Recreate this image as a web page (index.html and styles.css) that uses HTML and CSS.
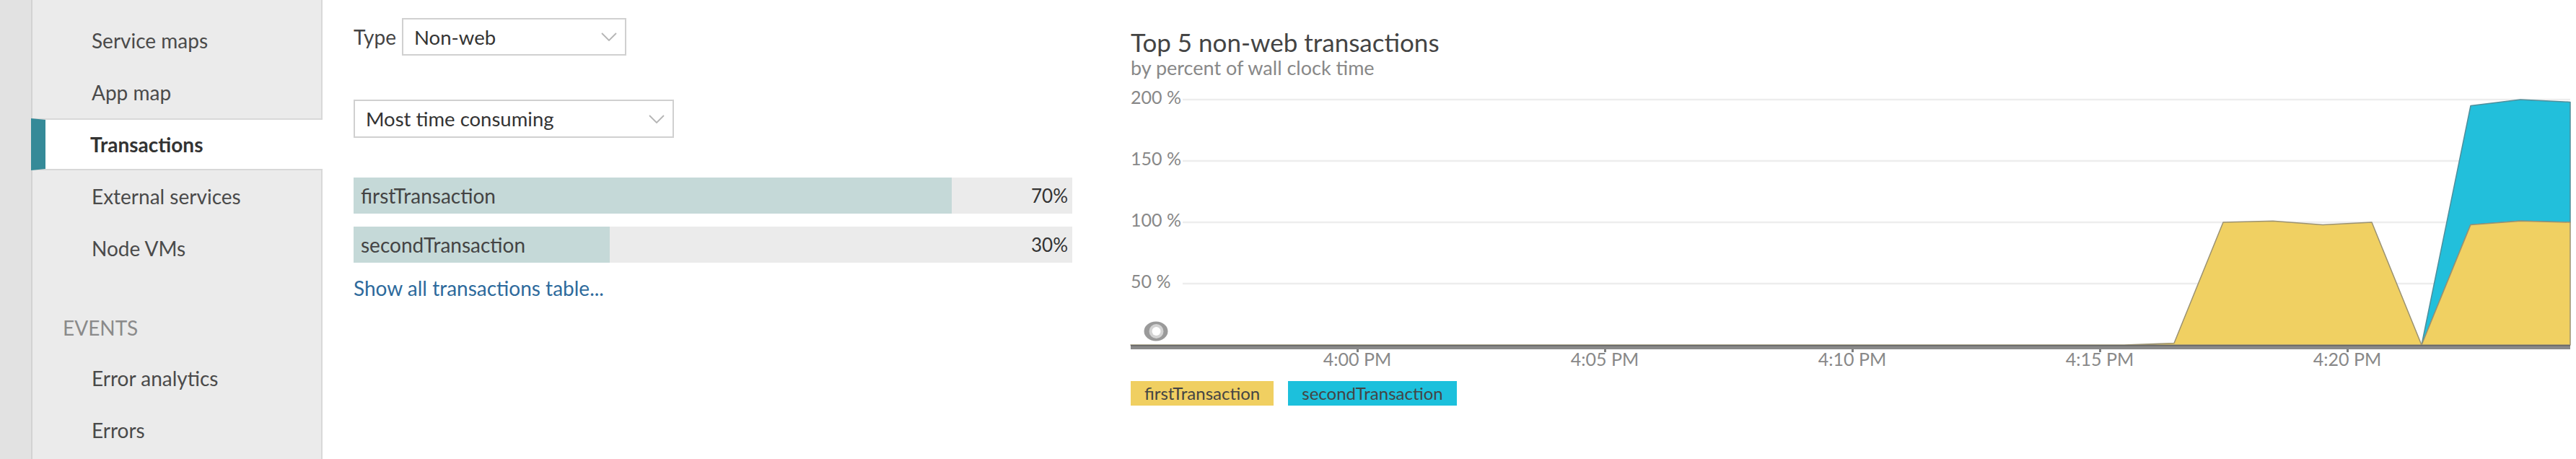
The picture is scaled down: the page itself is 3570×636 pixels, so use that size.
FILE: index.html
```html
<!DOCTYPE html>
<html>
<head>
<meta charset="utf-8">
<link rel="stylesheet" href="styles.css">
</head>
<body>
<div class="app">
  <div class="rail"></div>
  <nav class="nav">
    <div class="nav-item">Service maps</div>
    <div class="nav-item">App map</div>
    <div class="nav-item active">Transactions</div>
    <div class="nav-item">External services</div>
    <div class="nav-item">Node VMs</div>
    <div class="nav-head">EVENTS</div>
    <div class="nav-item">Error analytics</div>
    <div class="nav-item">Errors</div>
  </nav>
  <main class="main">
    <div class="type-row">
      <span class="type-label">Type</span>
      <div class="select select-type"><span>Non-web</span><svg class="chev" width="22" height="12" viewBox="0 0 22 12"><polyline points="1,1 11,11 21,1" fill="none" stroke="#b5b5b5" stroke-width="1.8"/></svg></div>
    </div>
    <div class="select select-sort"><span>Most time consuming</span><svg class="chev" width="22" height="12" viewBox="0 0 22 12"><polyline points="1,1 11,11 21,1" fill="none" stroke="#b5b5b5" stroke-width="1.8"/></svg></div>
    <div class="bars">
      <div class="bar">
        <div class="bar-fill" style="width:83.2%"></div>
        <span class="bar-name">firstTransaction</span>
        <span class="bar-pct">70%</span>
      </div>
      <div class="bar">
        <div class="bar-fill" style="width:35.6%"></div>
        <span class="bar-name">secondTransaction</span>
        <span class="bar-pct">30%</span>
      </div>
    </div>
    <a class="show-all">Show all transactions table...</a>
  </main>
  <section class="chart">
    <div class="chart-title">Top 5 non-web transactions</div>
    <div class="chart-sub">by percent of wall clock time</div>
    <svg class="plot" width="1995" height="410" viewBox="0 0 1995 410">
      <g class="grid">
        <line x1="72" y1="28" x2="1995" y2="28"/>
        <line x1="72" y1="113" x2="1995" y2="113"/>
        <line x1="72" y1="198" x2="1995" y2="198"/>
        <line x1="72" y1="283" x2="1995" y2="283"/>
      </g>
      <g class="ylab">
        <text x="0" y="28">200 %</text>
        <text x="0" y="113">150 %</text>
        <text x="0" y="198">100 %</text>
        <text x="0" y="283">50 %</text>
      </g>
      <ellipse cx="35" cy="349" rx="16.5" ry="13.5" fill="#9a9a9a"/>
      <ellipse cx="35.5" cy="349" rx="10" ry="10" fill="#d3d3d3"/>
      <circle cx="35.5" cy="349" r="6" fill="#fff"/>
      <polygon class="area-blue" points="1789,368 1857,36.5 1926,28 1995,31.4 1995,198 1926,196.3 1857,201.4"/>
      <polygon class="area-yellow" points="0,368 1377,368 1446,365.5 1514,198 1583,196.3 1652,201.4 1720,198 1789,368 1857,201.4 1926,196.3 1995,198 1995,368"/>
      <rect x="0" y="368" width="1995" height="6" fill="#898989"/>
      <rect x="0" y="368" width="1995" height="1.5" fill="#666"/>
      <g class="ticks">
        <rect x="313" y="374" width="3" height="4"/>
        <rect x="656" y="374" width="3" height="4"/>
        <rect x="999" y="374" width="3" height="4"/>
        <rect x="1342" y="374" width="3" height="4"/>
        <rect x="1685" y="374" width="3" height="4"/>
      </g>
      <g class="xlab">
        <text x="314" y="391">4:00 PM</text>
        <text x="657" y="391">4:05 PM</text>
        <text x="1000" y="391">4:10 PM</text>
        <text x="1343" y="391">4:15 PM</text>
        <text x="1686" y="391">4:20 PM</text>
      </g>
    </svg>
    <div class="legend">
      <span class="leg leg-first">firstTransaction</span>
      <span class="leg leg-second">secondTransaction</span>
    </div>
  </section>
</div>
</body>
</html>
```

FILE: styles.css
```css
* { box-sizing: border-box; }
html, body { margin: 0; padding: 0; background: #fff; }
body { width: 3570px; height: 636px; overflow: hidden; font-family: Lato, "Liberation Sans", sans-serif; color: #444; }

.app { display: flex; width: 3570px; height: 636px; }

.rail { flex: none; width: 45px; background: #e2e2e2; border-right: 2px solid #d2d2d2; }

.nav { flex: none; width: 402px; background: #ebebeb; border-right: 2px solid #d8d8d8; padding-top: 20px; }
.nav-item { height: 72px; display: flex; align-items: center; padding-left: 82px; font-size: 28px; color: #4a4a4a; }
.nav-item.active { background: #fff; font-weight: 700; color: #333; border-top: 2px solid #d8d8d8; border-bottom: 2px solid #d8d8d8; border-left: 20px solid #358a98; padding-left: 62px; margin-left: -2px; margin-right: -2px; }
.nav-head { height: 68px; margin-top: 40px; display: flex; align-items: center; padding-left: 42px; font-size: 28px; color: #8a8a8a; }

.main { flex: none; width: 1039px; padding-left: 43px; padding-top: 25px; }
.type-row { display: flex; align-items: center; gap: 8px; }
.type-label { font-size: 28px; color: #444; }
.select { display: flex; align-items: center; justify-content: space-between; height: 53px; border: 2px solid #d0d0d0; background: #fff; padding: 0 11px 0 15px; font-size: 27.5px; color: #333; }
.select-type { width: 311px; height: 52px; }
.select-sort { width: 444px; margin-top: 61px; }
.chev { display: block; }

.bars { margin-top: 55px; display: flex; flex-direction: column; gap: 18px; width: 996px; }
.bar { position: relative; height: 50px; background: #ebebeb; display: flex; align-items: center; justify-content: space-between; padding: 0 6px 0 10px; font-size: 28px; }
.bar-fill { position: absolute; left: 0; top: 0; bottom: 0; background: #c5d9d8; }
.bar-name { position: relative; color: #444; }
.bar-pct { position: relative; font-size: 26px; color: #333; }

.show-all { display: block; margin-top: 18px; font-size: 28px; line-height: 34px; color: #2d6a9c; }

.chart { flex: none; width: 1995px; margin-left: 81px; padding-top: 38px; }
.chart-title { font-size: 35px; line-height: 40px; color: #444; }
.chart-sub { font-size: 27px; line-height: 32px; color: #888; }
.plot { display: block; overflow: visible; }
.grid line { stroke: #ededed; stroke-width: 2.5; }
.ylab text { font-family: Lato, "Liberation Sans", sans-serif; font-size: 25px; fill: #888; dominant-baseline: middle; }
.xlab text { font-family: Lato, "Liberation Sans", sans-serif; font-size: 25px; fill: #888; dominant-baseline: middle; text-anchor: middle; }
.ticks rect { fill: #7f7f7f; }
.area-yellow { fill: #f0d062; stroke: #9b9272; stroke-width: 1.5; stroke-linejoin: round; }
.area-blue { fill: #22bfdb; stroke: #4f8f9c; stroke-width: 1.5; stroke-linejoin: round; }

.legend { display: flex; gap: 20px; margin-top: 8px; }
.leg { height: 34px; line-height: 34px; padding: 0 19px; font-size: 24px; color: #444; }
.leg-first { background: #f0cf61; }
.leg-second { background: #1cc0dc; }
```
